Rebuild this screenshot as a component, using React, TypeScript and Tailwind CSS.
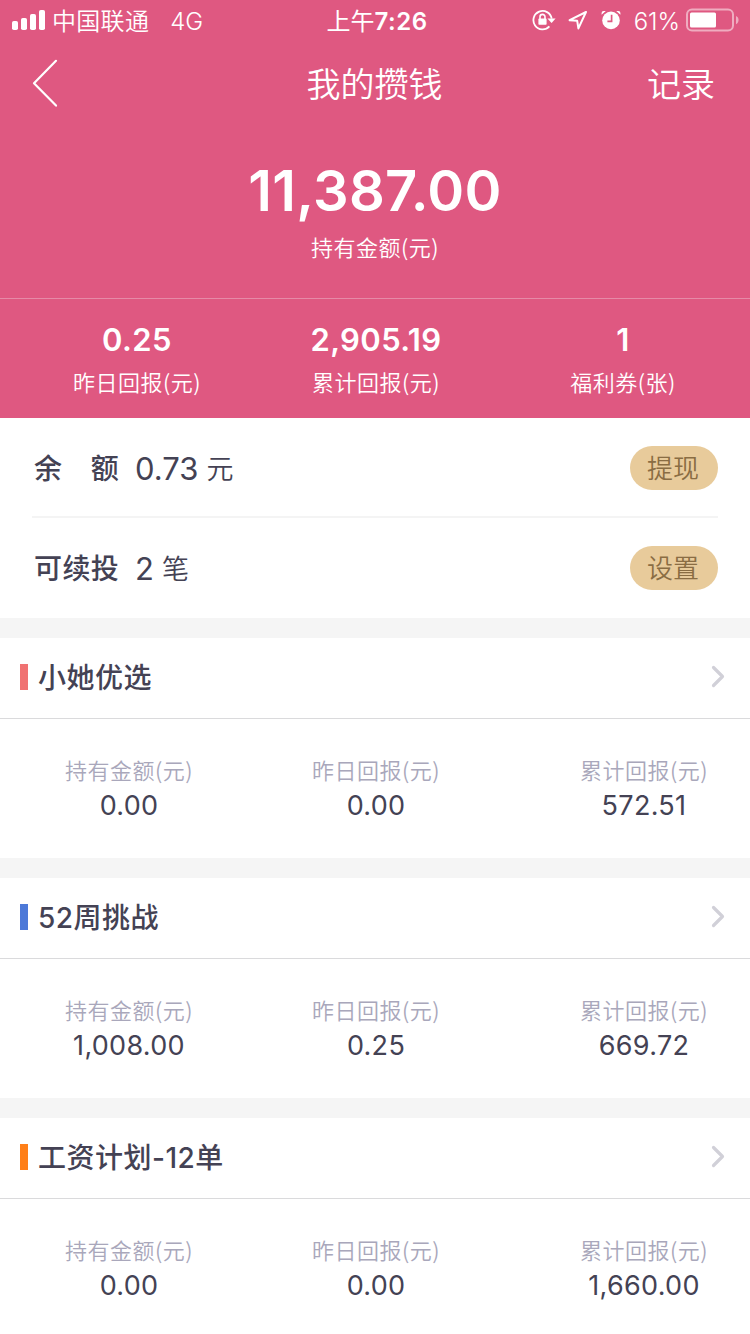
type Stat = {
  label: string;
  value: string;
};

type Plan = {
  title: string;
  bar: string;
  stats: Stat[];
};

const summary: Stat[] = [
  { label: "昨日回报(元)", value: "0.25" },
  { label: "累计回报(元)", value: "2,905.19" },
  { label: "福利券(张)", value: "1" },
];

const plans: Plan[] = [
  {
    title: "小她优选",
    bar: "bg-[#f07272]",
    stats: [
      { label: "持有金额(元)", value: "0.00" },
      { label: "昨日回报(元)", value: "0.00" },
      { label: "累计回报(元)", value: "572.51" },
    ],
  },
  {
    title: "52周挑战",
    bar: "bg-[#4d79d8]",
    stats: [
      { label: "持有金额(元)", value: "1,008.00" },
      { label: "昨日回报(元)", value: "0.25" },
      { label: "累计回报(元)", value: "669.72" },
    ],
  },
  {
    title: "工资计划-12单",
    bar: "bg-[#ff7f18]",
    stats: [
      { label: "持有金额(元)", value: "0.00" },
      { label: "昨日回报(元)", value: "0.00" },
      { label: "累计回报(元)", value: "1,660.00" },
    ],
  },
];

function StatusBar() {
  return (
    <div className="grid h-10 grid-cols-3 items-center text-2xl">
      <div className="flex items-center pl-3">
        <svg width="34" height="20" viewBox="0 0 34 20" fill="currentColor">
          <rect x="0" y="11" width="6" height="9" rx="1.8" />
          <rect x="9" y="8" width="6" height="12" rx="1.8" />
          <rect x="18" y="4" width="6" height="16" rx="1.8" />
          <rect x="27" y="0" width="6" height="20" rx="1.8" />
        </svg>
        <span className="ml-1.5 pt-[3px] font-[350] tracking-[0.3px]">中国联通</span>
        <span className="ml-[21px] pt-[3px] font-light">4G</span>
      </div>

      <div className="pt-[3px] pl-1 text-center">
        上午<span className="font-[580] tracking-[0.5px]">7:26</span>
      </div>

      <div className="flex items-center justify-end pr-[11px]">
        {/* Rotation lock */}
        <svg width="24" height="22" viewBox="0 0 24 22" fill="none" stroke="currentColor" strokeWidth="1.8">
          <path d="M17.4 17.4A9.2 9.2 0 1 1 19.7 9.6" />
          <path d="M15.4 9.4h8.2l-4 4.6z" fill="currentColor" stroke="none" />
          <path d="M8 10V7.9a2.5 2.5 0 0 1 5 0V10" strokeWidth="1.6" />
          <rect x="6.4" y="9.6" width="8.2" height="6.2" rx="0.8" fill="currentColor" stroke="none" />
        </svg>
        {/* Location */}
        <svg className="ml-3" width="20" height="20" viewBox="0 0 20 20" fill="none" stroke="currentColor" strokeWidth="2" strokeLinejoin="round">
          <path d="M18 2 1.6 10.2l7.6.6 1.2 7.6z" />
        </svg>
        {/* Alarm */}
        <svg className="ml-3" width="22" height="22" viewBox="0 0 22 22" fill="currentColor">
          <circle cx="11" cy="11.4" r="8.8" />
          <path d="M1.6 5.8V4A2 2 0 0 1 3.6 2h2.2zM20.4 5.8V4a2 2 0 0 0-2-2h-2.2z" />
          <path d="M11.6 5.8v6.6H7.4" fill="none" stroke="#df5881" strokeWidth="1.7" />
        </svg>
        <span className="ml-3 pt-[3px] font-light">61%</span>
        <svg className="ml-1.5" width="53" height="24" viewBox="0 0 53 24">
          <rect x="1" y="1.5" width="46" height="21" rx="5" fill="none" stroke="#fff" strokeOpacity="0.5" strokeWidth="2" />
          <rect x="4" y="4.5" width="26" height="15" rx="1.5" fill="#fff" />
          <path d="M50 8c3.4 1.2 3.4 7 0 8.2z" fill="#fff" fillOpacity="0.5" />
        </svg>
      </div>
    </div>
  );
}

function Header() {
  return (
    <header className="h-[418px] bg-[#df5881] text-white">
      <StatusBar />

      <nav className="grid h-[88px] grid-cols-3 items-center text-[34px] font-[350]">
        <svg className="ml-8" width="28" height="50" viewBox="0 0 28 50" fill="none" stroke="currentColor" strokeWidth="2.2" strokeLinecap="round" strokeLinejoin="round">
          <path d="M24 1.8 2 24.2 24 46.6" />
        </svg>
        <h1 className="pt-px pr-px text-center">我的攒钱</h1>
        <span className="pt-px pr-[35px] text-right">记录</span>
      </nav>

      <div className="flex h-[171px] flex-col items-center border-b border-[#e68aa7] pt-7">
        <div className="text-[56px] leading-[70px] font-[580] tracking-[0.3px]">11,387.00</div>
        <div className="mt-1 font-['Noto_Sans_CJK_SC',sans-serif] text-[22px] leading-8 font-[350] tracking-[0.5px]">持有金额(元)</div>
      </div>

      <div className="grid grid-cols-[272px_206px_272px] pt-[21px] pl-px text-center">
        {summary.map((item) => (
          <div key={item.label} className="last:pl-4">
            <div className="text-[31px] leading-10 font-[580] tracking-[0.4px]">{item.value}</div>
            <div className="mt-[5px] font-['Noto_Sans_CJK_SC',sans-serif] text-[22px] leading-8 font-[350] tracking-[0.5px]">
              {item.label}
            </div>
          </div>
        ))}
      </div>
    </header>
  );
}

function PillButton({ children }: { children: string }) {
  return (
    <button className="h-11 w-[88px] rounded-full bg-[#e8cb9b] pr-0.5 text-[26px] leading-[46px] font-[350] text-[#8a6d43]">
      {children}
    </button>
  );
}

function Balance() {
  return (
    <section className="px-8">
      <div className="flex h-[100px] items-center justify-between border-b-2 border-[#f4f4f4] pt-0.5">
        <div className="flex items-center pt-0.5">
          <span className="ml-0.5 w-[101px] text-[28px] font-medium tracking-[0.4px]">余　额</span>
          <span className="text-[31px]">0.73</span>
          <span className="ml-2 pt-[3px] text-[27px] font-[350]">元</span>
        </div>
        <PillButton>提现</PillButton>
      </div>
      <div className="flex h-[100px] items-center justify-between">
        <div className="flex items-center pt-0.5">
          <span className="ml-0.5 w-[101px] text-[28px] font-medium tracking-[0.4px]">可续投</span>
          <span className="text-[31px]">2</span>
          <span className="ml-2 pt-[3px] text-[27px] font-[350]">笔</span>
        </div>
        <PillButton>设置</PillButton>
      </div>
    </section>
  );
}

function PlanCard({ plan }: { plan: Plan }) {
  return (
    <section className="h-60 border-t-20 border-[#f5f5f5]">
      <div className="flex h-[81px] items-center border-b border-[#dadadc] pr-[25px] pb-0.5 pl-5">
        <span className={`h-[26px] w-2 ${plan.bar}`} />
        <h2 className="ml-2.5 flex-1 pt-0.5 text-[28px] font-medium tracking-[0.5px]">{plan.title}</h2>
        <svg width="14" height="24" viewBox="0 0 14 24" fill="none" stroke="#d1d0d8" strokeWidth="3.2" strokeLinecap="round" strokeLinejoin="round">
          <path d="m2.5 2.5 9 9-9 9" />
        </svg>
      </div>
      <div className="grid grid-cols-[256px_238px_256px] pt-[34px] pl-px text-center">
        {plan.stats.map((item) => (
          <div key={item.label} className="last:pl-[42px]">
            <div className="font-['Noto_Sans_CJK_SC',sans-serif] text-[22px] leading-8 font-[350] tracking-[0.5px] text-[#a9a7bb]">
              {item.label}
            </div>
            <div className="mt-[3px] text-[27px] leading-9 tracking-[0.3px]">{item.value}</div>
          </div>
        ))}
      </div>
    </section>
  );
}

export default function App() {
  return (
    <div className="h-[1334px] w-[750px] overflow-hidden bg-white font-[Inter,'Noto_Sans_CJK_SC',sans-serif] text-[#444254]">
      <Header />
      <Balance />
      {plans.map((plan) => (
        <PlanCard key={plan.title} plan={plan} />
      ))}
    </div>
  );
}
